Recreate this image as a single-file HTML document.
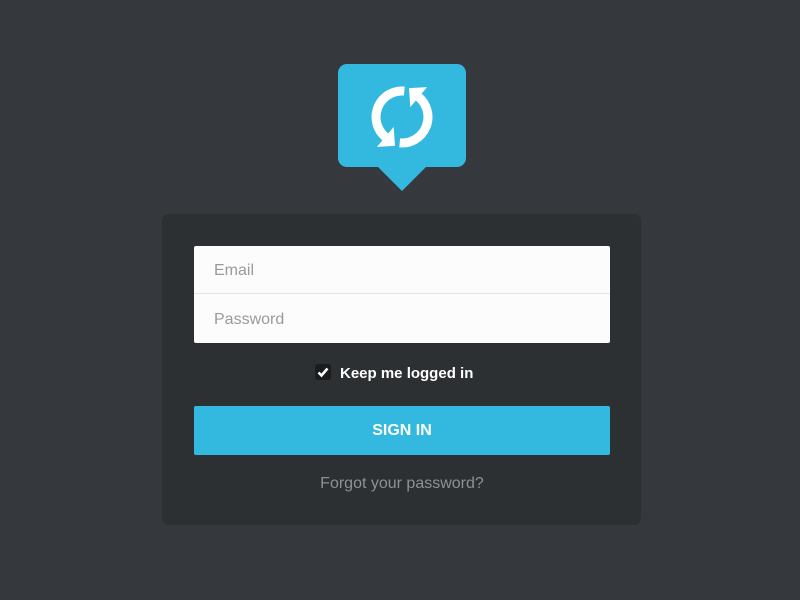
<!DOCTYPE html>
<html><head><style>
body{margin:0;width:800px;height:600px;background:#35383c;font-family:"Liberation Sans",sans-serif;position:relative;overflow:hidden}
.card{position:absolute;left:162px;top:214px;width:479px;height:311px;background:#2d3033;border-radius:7px}
.inp{position:absolute;left:194px;width:416px;height:48px;background:#fcfcfc;color:#9a9a9a;font-size:16px;line-height:50px;box-sizing:border-box;padding-left:20px}
.btn{position:absolute;left:194px;top:406px;width:416px;height:49px;background:#33b9e0;border-radius:2px;color:#fff;font-weight:bold;font-size:16px;text-align:center;line-height:49px}
</style></head><body>
<svg style="position:absolute;left:0;top:0" width="800" height="220">
<rect x="338" y="64" width="128" height="103" rx="9" fill="#33b9e0"/>
<polygon points="377,166 427,166 402,191" fill="#33b9e0"/>
<g fill="none" stroke="#fff" stroke-width="9">
<path d="M404.3,91.1 A26,26 0 0 0 385.3,136.9"/>
<path d="M399.7,142.9 A26,26 0 0 0 418.7,97.1"/>
</g>
<polygon points="393.7,126.9 376.9,146.9 395,145.9" fill="#fff"/>
<polygon points="427.1,87.1 410.3,107.1 409,88.1" fill="#fff"/>
</svg>
<div class="card"></div>
<div class="inp" style="top:246px;border-radius:2px 2px 0 0;border-bottom:1px solid #e4e4e4">Email</div>
<div class="inp" style="top:294px;height:49px;line-height:51px;border-radius:0 0 2px 2px">Password</div>
<div style="position:absolute;left:315px;top:364px;width:16px;height:16px;background:#1a1c1e;border-radius:3px"></div>
<svg style="position:absolute;left:315px;top:364px" width="16" height="16"><path d="M3.5,8.5 L6.5,11.5 L12.5,4.5" stroke="#fff" stroke-width="2.6" fill="none"/></svg>
<div style="position:absolute;left:340px;top:365px;color:#fff;font-weight:bold;font-size:15px;line-height:18px">Keep me logged in</div>
<div class="btn">SIGN IN</div>
<div style="position:absolute;left:0;width:804px;top:475px;text-align:center;color:#8c9196;font-size:16px">Forgot your password?</div>
</body></html>
